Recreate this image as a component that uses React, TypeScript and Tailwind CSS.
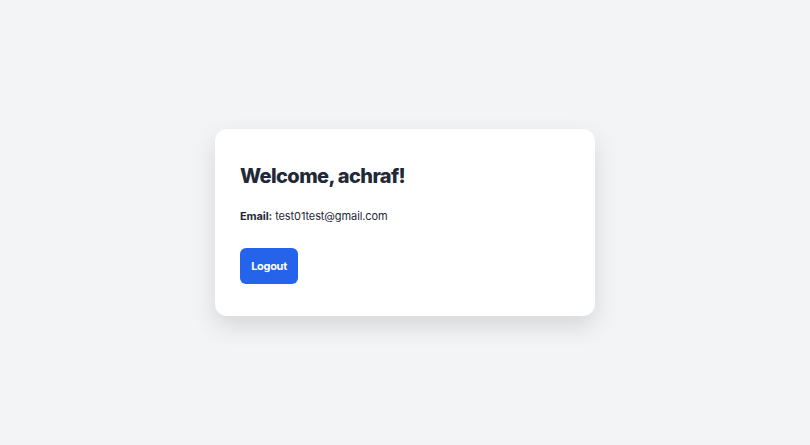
export default function App() {
  return (
    <main
      className="min-h-screen bg-[#f3f4f6] flex items-center justify-center"
      style={{ fontFamily: "Inter, 'Noto Sans', sans-serif" }}
    >
      {/* Profile card */}
      <div className="w-[380px] bg-white rounded-[12px] shadow-[0_10px_25px_rgba(0,0,0,0.12)] px-[25px] pt-[33px] pb-[32px]">
        <h1 className="text-[20px] leading-[28px] font-extrabold text-[#1f2937] tracking-[-0.6px]">
          Welcome, achraf!
        </h1>
        <p className="mt-[17px] text-[11px] leading-[18px] text-[#1f2937] tracking-[-0.1px]">
          <span className="font-bold">Email:</span> test01test@gmail.com
        </p>
        <button className="mt-[23px] h-[36px] w-[58px] rounded-[6px] bg-[#2563eb] text-white text-[11px] font-bold tracking-[-0.3px]">
          Logout
        </button>
      </div>
    </main>
  );
}
